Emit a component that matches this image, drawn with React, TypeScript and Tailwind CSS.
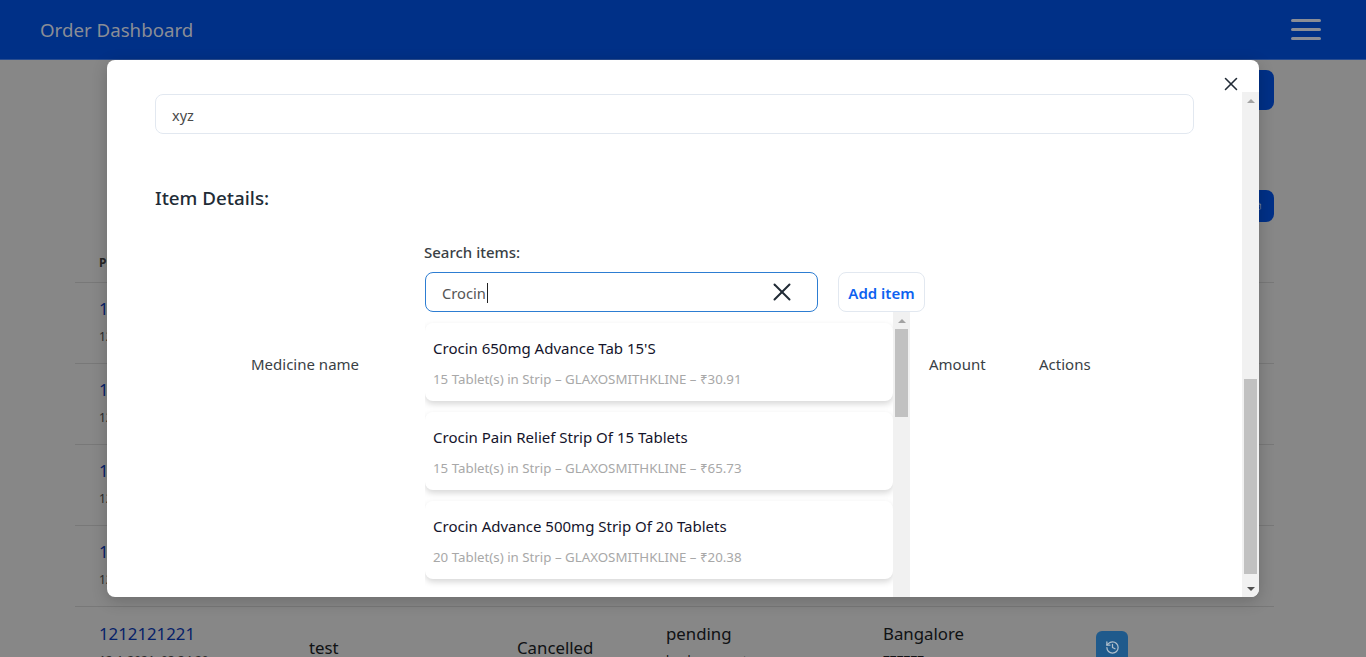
import { X, History, FileDown } from "lucide-react";

const rows = [
  { id: "1212121221", date: "12-1-2021, 03:34:20" },
  { id: "1212121221", date: "12-1-2021, 03:34:20" },
  { id: "1212121221", date: "12-1-2021, 03:34:20" },
  { id: "1212121221", date: "12-1-2021, 03:34:20" },
];

const results = [
  { name: "Crocin 650mg Advance Tab 15'S", info: "15 Tablet(s) in Strip – GLAXOSMITHKLINE – ₹30.91" },
  { name: "Crocin Pain Relief Strip Of 15 Tablets", info: "15 Tablet(s) in Strip – GLAXOSMITHKLINE – ₹65.73" },
  { name: "Crocin Advance 500mg Strip Of 20 Tablets", info: "20 Tablet(s) in Strip – GLAXOSMITHKLINE – ₹20.38" },
];

// Fake classic scrollbar, the reference shows Windows style ones
function Scrollbar({ thumbTop, thumbHeight }: { thumbTop: string; thumbHeight: string }) {
  return (
    <div className="w-[17px] shrink-0 h-full bg-[#f1f1f1] flex flex-col items-center">
      <div className="h-[17px] shrink-0 flex items-center justify-center">
        <div className="w-0 h-0 border-x-[4px] border-x-transparent border-b-[4px] border-b-[#a3a3a3]" />
      </div>
      <div className={`flex-1 w-full px-[2px] ${thumbTop}`}>
        <div className={`bg-[#c1c1c1] w-[13px] ${thumbHeight}`} />
      </div>
      <div className="h-[17px] shrink-0 flex items-center justify-center">
        <div className="w-0 h-0 border-x-[4px] border-x-transparent border-t-[4px] border-t-[#505050]" />
      </div>
    </div>
  );
}

function ResultCard({ name, info }: { name: string; info: string }) {
  return (
    <div className="h-[78px] bg-white rounded-lg shadow-[0_3px_6px_rgba(0,0,0,0.16)] px-2 pt-[14px] mb-[11px]">
      <p className="text-[15px] leading-[22px] text-[#14142b]">{name}</p>
      <p className="text-[13.3px] leading-[18px] mt-[11px] text-[#a8a8a8]">{info}</p>
    </div>
  );
}

export default function App() {
  return (
    <div className="relative h-screen overflow-hidden bg-white font-['Noto_Sans','Open_Sans',sans-serif] text-[#212529]">
      {/* Page behind the modal */}
      <nav className="relative z-20 h-[60px] bg-[#003087] border-b border-[#2a4d8f] flex items-center justify-between pl-10 pr-[45px]">
        <span className="text-[18.7px] pt-[2px] text-[#8a8d96]">Order Dashboard</span>
        <div className="flex flex-col gap-[6px] w-[30px]">
          <div className="h-[3px] rounded-full bg-[#8a8d96]" />
          <div className="h-[3px] rounded-full bg-[#8a8d96]" />
          <div className="h-[3px] rounded-full bg-[#8a8d96]" />
        </div>
      </nav>

      <main className="px-[75px] pr-[92px] pt-[10px]">
        <div className="flex justify-end">
          <button className="relative z-20 w-[120px] h-10 rounded-lg bg-[#003087]" />
        </div>
        <div className="flex justify-end mt-20">
          <button className="relative z-20 w-[120px] h-8 rounded-lg bg-[#003087] flex items-center justify-end pr-[12px] text-[#8a8d96]">
            <FileDown size={8} />
          </button>
        </div>
        <div className="h-[60px] flex items-end pb-[10px] pl-6 text-[12px] font-bold text-[#4a4a4a]">Phone</div>
        <div className="border-t border-[#e3e3e3]">
          {rows.map((r, i) => (
            <div key={i} className="h-[81px] border-b border-[#e3e3e3] pl-6 pt-[14px]">
              <p className="text-[16.8px] leading-6 text-[#0d3fc7]">{r.id}</p>
              <p className="text-[12px] leading-5 mt-[6px] text-[#555]">{r.date}</p>
            </div>
          ))}
          <div className="h-[81px] pl-6 pt-[15px] flex">
            <div className="w-[210px]">
              <p className="text-[16.8px] leading-6 text-[#0d3fc7]">1212121221</p>
              <p className="text-[12px] leading-5 mt-[5px] text-[#555]">12-1-2021, 03:34:20</p>
            </div>
            <p className="w-[208px] pt-[14px] text-[16.8px] leading-6">test</p>
            <p className="w-[149px] pt-[14px] text-[16.8px] leading-6">Cancelled</p>
            <div className="w-[217px]">
              <p className="text-[16.8px] leading-6">pending</p>
              <p className="text-[12px] leading-5 mt-[5px]">bank payment</p>
            </div>
            <div className="w-[213px]">
              <p className="text-[16.8px] leading-6">Bangalore</p>
              <p className="text-[12px] leading-5 mt-[5px]">777777</p>
            </div>
            <button className="relative z-20 w-8 h-8 mt-[9px] rounded-md bg-[#1f5a8c] flex items-center justify-center text-[#b0bfcc]">
              <History size={15} />
            </button>
          </div>
        </div>
      </main>

      {/* Backdrop */}
      <div className="absolute inset-0 z-10 bg-black/47" />

      {/* Modal */}
      <div className="absolute z-30 top-[60px] left-[107px] w-[1152px] h-[537px] bg-white rounded-lg overflow-hidden flex flex-col shadow-[0_4px_16px_rgba(0,0,0,0.2)]">
        <div className="h-8 shrink-0 flex justify-end items-start pt-[13px] pr-[17px]">
          <X size={22} strokeWidth={1.7} className="text-[#212b36]" />
        </div>
        <div className="flex-1 min-h-0 flex">
          <div className="flex-1 min-w-0 pl-12 pr-[48px] pt-[2px] relative">
            <div className="h-10 border border-[#e2e8f0] rounded-lg flex items-center px-4 pt-1 text-[14.5px] text-[#4a4a4a]">xyz</div>

            <h2 className="mt-[52px] text-[18.8px] leading-6 font-medium text-[#212b36]">Item Details:</h2>

            <div className="ml-[269px] mt-8">
              <p className="text-[15px] leading-5 font-medium text-[#3a3f45]">Search items:</p>
              <div className="flex gap-5 mt-[10px]">
                <div className="ml-px w-[393px] h-10 border border-[#2d7dd2] rounded-lg flex items-center justify-between pl-4 pr-5">
                  <span className="text-[14.7px] mt-[2px] text-[#555] border-r border-[#222] leading-[20px] pr-px">Crocin</span>
                  <X size={30} strokeWidth={1.6} className="text-[#212b36]" />
                </div>
                <button className="w-[87px] h-10 border border-[#e2e8f0] rounded-lg pt-[2px] text-[15px] font-semibold text-[#0d62f0]">Add item</button>
              </div>
            </div>

            <div className="flex mt-10 pl-[96px] text-[15px] leading-6 text-[#3a3f45]">
              <span className="w-[678px]">Medicine name</span>
              <span className="w-[110px]">Amount</span>
              <span>Actions</span>
            </div>

            {/* Search suggestions, runs on below the modal edge */}
            <div className="absolute top-[220px] left-[318px] w-[485px] h-[340px] bg-white flex">
              <div className="flex-1 min-w-0 pt-[11px] overflow-hidden">
                {results.map((r) => (
                  <ResultCard key={r.name} name={r.name} info={r.info} />
                ))}
              </div>
              <Scrollbar thumbTop="" thumbHeight="h-[88px]" />
            </div>
          </div>
          <Scrollbar thumbTop="pt-[270px]" thumbHeight="h-[195px]" />
        </div>
      </div>
    </div>
  );
}
